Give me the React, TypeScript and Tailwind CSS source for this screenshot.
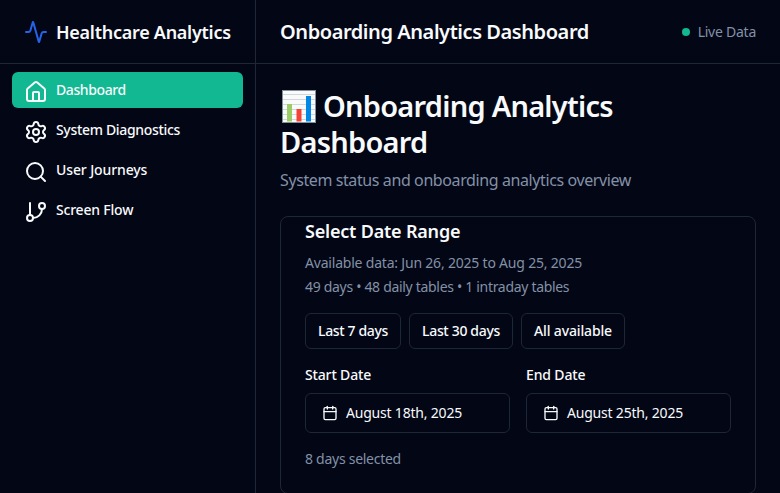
import { Activity, Calendar, GitBranch, House, Search, Settings, type LucideIcon } from "lucide-react";

const navItems: { label: string; icon: LucideIcon; active?: boolean; tracking: string }[] = [
  { label: "Dashboard", icon: House, active: true, tracking: "tracking-[-0.4px]" },
  { label: "System Diagnostics", icon: Settings, tracking: "tracking-[-0.33px]" },
  { label: "User Journeys", icon: Search, tracking: "tracking-[-0.12px]" },
  { label: "Screen Flow", icon: GitBranch, tracking: "tracking-[-0.2px]" },
];

function ChartGlyph() {
  return (
    <svg viewBox="0 0 36 36" className="mr-[7px] inline-block size-9 align-[-7px]" aria-hidden="true">
      <rect x="2.5" y="2.5" width="33" height="32" fill="#fafafa" stroke="#82929b" />
      <path d="M3 6.5h32M3 11.5h32M3 16.5h32M3 21.5h32M3 26.5h32M3 31.5h32" stroke="#cfd8dc" />
      <rect x="7" y="16" width="5" height="17.5" fill="#9ccc65" />
      <rect x="16.5" y="21" width="5" height="12.5" fill="#f44336" />
      <rect x="26" y="8" width="5" height="25.5" fill="#0288e5" />
    </svg>
  );
}

function DateField({ label, value }: { label: string; value: string }) {
  return (
    <div className="flex-1">
      <div className="text-sm leading-5 font-medium tracking-[-0.15px]">{label}</div>
      <button className="mt-2 flex h-10 w-full items-center rounded-md border border-[#1e2735] px-4 text-sm tracking-[-0.2px]">
        <Calendar className="mr-2 size-4" />
        {value}
      </button>
    </div>
  );
}

export default function App() {
  return (
    <div className="flex h-[493px] w-[780px] overflow-hidden bg-[#020615] font-['Noto_Sans',sans-serif] text-[#f8fafc]">
      <aside className="w-64 shrink-0 border-r border-[#1e2735]">
        <div className="flex h-16 items-center gap-2 border-b border-[#1e2735] px-6">
          <Activity className="size-6 shrink-0 text-[#2563eb]" />
          <span className="text-lg font-semibold tracking-[-0.27px] whitespace-nowrap">Healthcare Analytics</span>
        </div>
        <nav className="flex flex-col gap-1 px-3 py-2">
          {navItems.map(({ label, icon: Icon, active, tracking }) => (
            <a key={label} className={`flex h-9 items-start gap-2 rounded-md px-3 pt-2 text-sm leading-5 font-medium ${active ? "bg-[#12b891]" : ""}`}>
              <Icon className="size-6 shrink-0" />
              <span className={`whitespace-nowrap ${tracking}`}>{label}</span>
            </a>
          ))}
        </nav>
      </aside>
      <main className="min-w-0 flex-1">
        <header className="flex h-16 items-center justify-between border-b border-[#1e2735] px-6">
          <span className="text-xl font-semibold tracking-[-0.43px] whitespace-nowrap">Onboarding Analytics Dashboard</span>
          <div className="flex items-center gap-2 text-sm text-[#8391a7]">
            <i className="size-2 rounded-full bg-[#12b891]" />
            <span className="tracking-[-0.25px] whitespace-nowrap">Live Data</span>
          </div>
        </header>
        <div className="p-6">
          <h1 className="h-18 text-[29px] leading-9 font-semibold tracking-[-0.75px] whitespace-nowrap">
            <ChartGlyph />
            Onboarding Analytics
            <br />
            Dashboard
          </h1>
          <p className="mt-2 text-base leading-6 tracking-[-0.4px] whitespace-nowrap text-[#8391a7]">System status and onboarding analytics overview</p>
          <section className="mt-6 h-[278px] rounded-lg border border-[#1e2735] px-6">
            <h2 className="text-lg leading-7 font-semibold tracking-[-0.2px]">Select Date Range</h2>
            <div className="mt-1.5 text-sm leading-6 text-[#8391a7]">
              <p className="tracking-[-0.2px]">Available data: Jun 26, 2025 to Aug 25, 2025</p>
              <p className="tracking-[-0.31px]">49 days • 48 daily tables • 1 intraday tables</p>
            </div>
            <div className="mt-3.5 flex gap-2 text-sm font-medium whitespace-nowrap">
              <button className="h-9 w-24 rounded-md border border-[#1e2735] tracking-[-0.36px]">Last 7 days</button>
              <button className="h-9 w-26 rounded-md border border-[#1e2735] tracking-[-0.33px]">Last 30 days</button>
              <button className="h-9 w-26 rounded-md border border-[#1e2735] tracking-[-0.15px]">All available</button>
            </div>
            <div className="mt-4 flex gap-4">
              <DateField label="Start Date" value="August 18th, 2025" />
              <DateField label="End Date" value="August 25th, 2025" />
            </div>
            <p className="mt-4 text-sm leading-5 tracking-[-0.27px] text-[#8391a7]">8 days selected</p>
          </section>
        </div>
      </main>
    </div>
  );
}
